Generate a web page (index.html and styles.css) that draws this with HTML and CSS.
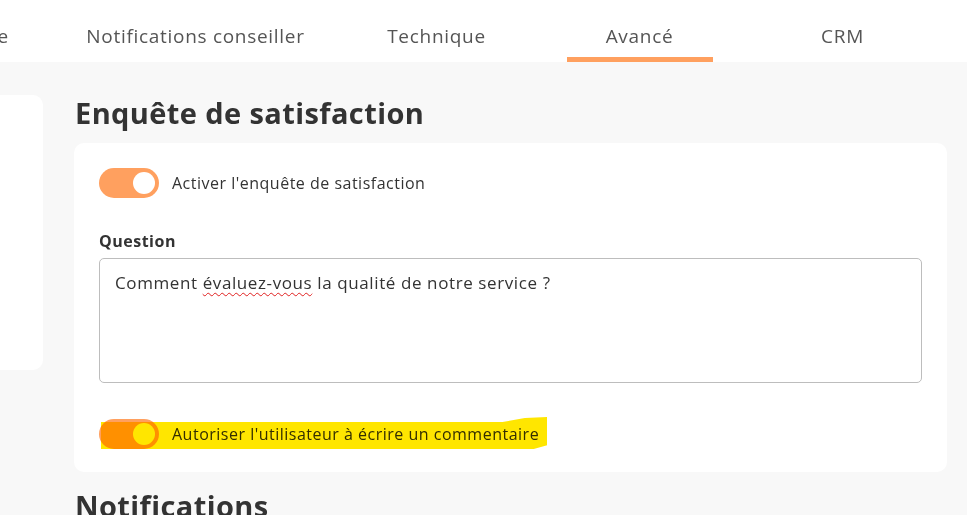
FILE: index.html
```html
<!DOCTYPE html>
<html lang="fr">
<head>
    <meta charset="UTF-8">
    <meta name="viewport" content="width=device-width, initial-scale=1.0">
    <title>Paramètres - Avancé</title>
    <link rel="stylesheet" href="styles.css">
</head>
<body>
    <nav class="tabs">
        <a class="tab tab-first">Générale</a>
        <a class="tab tab-wide">Notifications conseiller</a>
        <a class="tab">Technique</a>
        <a class="tab active"><span class="tab-label">Avancé</span></a>
        <a class="tab">CRM</a>
    </nav>

    <div class="page">
        <aside class="side-card"></aside>

        <main class="settings">
            <h2 class="section-title">Enquête de satisfaction</h2>
            <div class="settings-card">
                <label class="switch-row">
                    <span class="switch on"><span class="knob"></span></span>
                    <span class="switch-label">Activer l'enquête de satisfaction</span>
                </label>

                <div class="field">
                    <div class="field-label">Question</div>
                    <div class="textarea">Comment <span class="misspelled">évaluez-vous</span> la qualité de notre service ?</div>
                </div>

                <label class="switch-row highlighted">
                    <span class="switch on"><span class="knob"></span></span>
                    <span class="switch-label">Autoriser l'utilisateur à écrire un commentaire</span>
                    <span class="marker"></span>
                </label>
            </div>

            <h2 class="section-title">Notifications</h2>
        </main>
    </div>
</body>
</html>
```

FILE: styles.css
```css
body {
    margin: 0;
    padding: 0;
    font-family: 'Open Sans', 'Liberation Sans', sans-serif;
    background-color: #f8f8f8;
    color: #333;
    overflow: hidden;
}

.tabs {
    display: flex;
    justify-content: flex-end;
    height: 62px;
    padding-right: 23px;
    background-color: white;
    overflow: hidden;
}

.tab {
    flex: none;
    width: 203px;
    display: flex;
    justify-content: center;
    align-items: center;
    padding-top: 10px;
    box-sizing: border-box;
    font-size: 19px;
    letter-spacing: 0.7px;
    color: #555;
    cursor: pointer;
}

.tab-first {
    width: auto;
    padding: 10px 47px 0;
}

.tab-wide {
    width: 279px;
}

.tab.active {
    align-items: stretch;
    padding-top: 0;
}

.tab-label {
    width: 146px;
    display: flex;
    align-items: center;
    justify-content: center;
    padding-top: 15px;
    border-bottom: 5px solid #ffa05f;
    box-sizing: border-box;
}

.page {
    display: flex;
    gap: 31px;
    padding-top: 33px;
}

.side-card {
    flex: none;
    width: 43px;
    height: 275px;
    background-color: white;
    border-radius: 0 10px 10px 0;
}

.settings {
    width: 873px;
}

.section-title {
    margin: 0 0 12px 1px;
    font-size: 29px;
    font-weight: 700;
    letter-spacing: 0.4px;
    line-height: 36px;
    color: #333;
}

.settings-card {
    background-color: white;
    border-radius: 10px;
    padding: 25px 25px 23px;
    margin-bottom: 16px;
}

.switch-row {
    position: relative;
    display: flex;
    align-items: center;
    gap: 13px;
    width: max-content;
}

.switch {
    width: 60px;
    height: 30px;
    border-radius: 15px;
    background-color: #ddd;
    display: flex;
    align-items: center;
    padding: 0 4px;
    box-sizing: border-box;
}

.switch.on {
    background-color: #ffa05f;
    justify-content: flex-end;
}

.knob {
    width: 22px;
    height: 22px;
    border-radius: 50%;
    background-color: white;
}

.switch-label {
    font-size: 16px;
    letter-spacing: 0.5px;
    line-height: 20px;
    color: #333;
}

.field {
    margin-top: 33px;
}

.field-label {
    font-size: 16px;
    font-weight: 700;
    letter-spacing: 0.5px;
    line-height: 20px;
    margin-bottom: 7px;
}

.textarea {
    height: 125px;
    border: 1px solid #bdbdbd;
    border-radius: 5px;
    padding: 14px 15px;
    box-sizing: border-box;
    font-size: 17px;
    letter-spacing: 0.6px;
    line-height: 20px;
    color: #333;
}

.misspelled {
    text-decoration: underline wavy #e02020;
    text-decoration-thickness: 1px;
    text-underline-offset: 3px;
}

.highlighted {
    margin-top: 36px;
}

/* yellow marker stroke drawn over the row */
.marker {
    position: absolute;
    left: 2px;
    right: -8px;
    top: -2px;
    bottom: 0;
    background-color: #ffe600;
    mix-blend-mode: multiply;
    clip-path: polygon(0 5px, 90% 5px, 95% 1px, 100% 0, 100% 88%, 97% 100%, 0 100%);
    pointer-events: none;
}
```
